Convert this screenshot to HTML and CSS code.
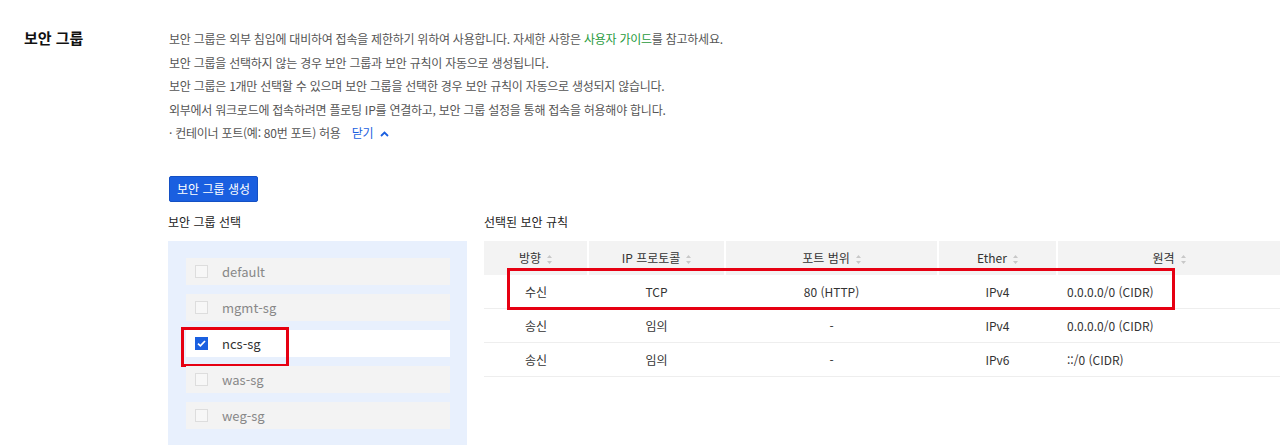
FILE: index.html
```html
<!DOCTYPE html>
<html lang="ko">
<head>
    <meta charset="UTF-8">
    <meta name="viewport" content="width=device-width, initial-scale=1.0">
    <title>보안 그룹</title>
    <link rel="stylesheet" href="styles.css">
</head>
<body>
    <div class="section">
        <h3 class="section-title">보안 그룹</h3>
        <div class="section-body">
            <ul class="notes">
                <li>보안 그룹은 외부 침입에 대비하여 접속을 제한하기 위하여 사용합니다. 자세한 사항은 <a class="guide" href="#">사용자 가이드</a>를 참고하세요.</li>
                <li>보안 그룹을 선택하지 않는 경우 보안 그룹과 보안 규칙이 자동으로 생성됩니다.</li>
                <li>보안 그룹은 1개만 선택할 수 있으며 보안 그룹을 선택한 경우 보안 규칙이 자동으로 생성되지 않습니다.</li>
                <li>외부에서 워크로드에 접속하려면 플로팅 IP를 연결하고, 보안 그룹 설정을 통해 접속을 허용해야 합니다.</li>
                <li>· 컨테이너 포트(예: 80번 포트) 허용
                    <a class="toggle" href="#">닫기
                        <svg width="9" height="6" viewBox="0 0 9 6"><path d="M1 5 L4.5 1.5 L8 5" fill="none" stroke="currentColor" stroke-width="1.8"/></svg>
                    </a>
                </li>
            </ul>

            <button class="btn-primary">보안 그룹 생성</button>

            <div class="pickers">
                <div class="group-picker">
                    <div class="label">보안 그룹 선택</div>
                    <div class="group-list">
                        <label class="group-item"><span class="check"></span>default</label>
                        <label class="group-item"><span class="check"></span>mgmt-sg</label>
                        <label class="group-item selected">
                            <span class="check">
                                <svg width="9" height="7" viewBox="0 0 9 7"><path d="M1 3.6 L3.4 5.8 L8 1" fill="none" stroke="#fff" stroke-width="1.7"/></svg>
                            </span>ncs-sg
                            <span class="mark mark-item"></span>
                        </label>
                        <label class="group-item"><span class="check"></span>was-sg</label>
                        <label class="group-item"><span class="check"></span>weg-sg</label>
                    </div>
                </div>

                <div class="rules">
                    <div class="label">선택된 보안 규칙</div>
                    <div class="table-wrap">
                        <table class="rule-table">
                            <colgroup>
                                <col style="width: 104px">
                                <col style="width: 137px">
                                <col style="width: 213px">
                                <col style="width: 119px">
                                <col>
                            </colgroup>
                            <thead>
                                <tr>
                                    <th>방향<svg class="sort" width="5" height="9" viewBox="0 0 5 9"><path d="M2.5 0 L5 3 L0 3 Z M2.5 9 L5 6 L0 6 Z" fill="#c8c8c8"/></svg></th>
                                    <th>IP 프로토콜<svg class="sort" width="5" height="9" viewBox="0 0 5 9"><path d="M2.5 0 L5 3 L0 3 Z M2.5 9 L5 6 L0 6 Z" fill="#c8c8c8"/></svg></th>
                                    <th>포트 범위<svg class="sort" width="5" height="9" viewBox="0 0 5 9"><path d="M2.5 0 L5 3 L0 3 Z M2.5 9 L5 6 L0 6 Z" fill="#c8c8c8"/></svg></th>
                                    <th>Ether<svg class="sort" width="5" height="9" viewBox="0 0 5 9"><path d="M2.5 0 L5 3 L0 3 Z M2.5 9 L5 6 L0 6 Z" fill="#c8c8c8"/></svg></th>
                                    <th>원격<svg class="sort" width="5" height="9" viewBox="0 0 5 9"><path d="M2.5 0 L5 3 L0 3 Z M2.5 9 L5 6 L0 6 Z" fill="#c8c8c8"/></svg></th>
                                </tr>
                            </thead>
                            <tbody>
                                <tr>
                                    <td>수신</td>
                                    <td>TCP</td>
                                    <td>80 (HTTP)</td>
                                    <td>IPv4</td>
                                    <td class="remote">0.0.0.0/0 (CIDR)</td>
                                </tr>
                                <tr>
                                    <td>송신</td>
                                    <td>임의</td>
                                    <td>-</td>
                                    <td>IPv4</td>
                                    <td class="remote">0.0.0.0/0 (CIDR)</td>
                                </tr>
                                <tr>
                                    <td>송신</td>
                                    <td>임의</td>
                                    <td>-</td>
                                    <td>IPv6</td>
                                    <td class="remote">::/0 (CIDR)</td>
                                </tr>
                            </tbody>
                        </table>
                        <span class="mark mark-row"></span>
                    </div>
                </div>
            </div>
        </div>
    </div>
</body>
</html>
```

FILE: styles.css
```css
body {
    margin: 0;
    font-family: "Noto Sans CJK KR", "Noto Sans", sans-serif;
    font-size: 12px;
    color: #333;
    background: #fff;
    overflow: hidden;
}
.section {
    display: flex;
}
.section-title {
    width: 145px;
    margin: 0;
    padding: 27px 0 0 24px;
    font-size: 15px;
    font-weight: bold;
    line-height: 22px;
    color: #111;
}
.section-body {
    flex: 1;
    padding-top: 27px;
}
.notes {
    list-style-type: none;
    margin: 0;
    padding: 0;
    color: #555;
    letter-spacing: -0.25px;
}
.notes li {
    line-height: 23.5px;
}
.guide {
    color: #1f9a3c;
    text-decoration: none;
}
.toggle {
    margin-left: 8px;
    color: #1a5fe0;
    text-decoration: none;
}
.toggle svg {
    margin-left: 4px;
    vertical-align: 1px;
}
.btn-primary {
    display: block;
    margin-top: 31px;
    width: 89px;
    height: 26px;
    padding: 0;
    border: 1px solid #1450c4;
    border-radius: 2px;
    background: #1a5fe0;
    color: #fff;
    font-family: inherit;
    font-size: 12px;
}
.pickers {
    display: flex;
    gap: 17px;
    margin-top: 11px;
}
.label {
    line-height: 18px;
    margin-bottom: 10px;
    color: #222;
}
.group-picker {
    width: 299px;
    margin-left: -1px;
}
.group-list {
    background: #e8f0fd;
    padding: 17px 17px 20px 18px;
    display: flex;
    flex-direction: column;
    gap: 9px;
}
.group-item {
    position: relative;
    display: flex;
    align-items: center;
    height: 27px;
    padding-left: 9px;
    background: #f3f3f3;
    color: #888;
    font-size: 13px;
}
.group-item.selected {
    background: #fff;
    color: #333;
}
.check {
    display: flex;
    align-items: center;
    justify-content: center;
    width: 11px;
    height: 11px;
    margin-right: 14px;
    border: 1px solid #ddd;
    background: #f7f7f7;
}
.selected .check {
    border-color: #1a5fe0;
    background: #1a5fe0;
}
.rules {
    flex: 1;
}
.table-wrap {
    position: relative;
}
.rule-table {
    width: 100%;
    border-collapse: collapse;
    table-layout: fixed;
}
.rule-table th {
    height: 34px;
    padding: 0;
    background: #f3f3f3;
    border-left: 2px solid #fff;
    font-weight: normal;
    color: #333;
}
.rule-table th:first-child {
    border-left: none;
}
.rule-table td {
    height: 33px;
    padding: 0;
    text-align: center;
    border-bottom: 1px solid #eee;
}
.rule-table td.remote {
    text-align: left;
    padding-left: 10px;
}
.sort {
    margin-left: 6px;
    vertical-align: -1px;
}
/* red highlight boxes drawn over the selected row and item */
.mark {
    position: absolute;
    border: 3px solid #e60012;
    pointer-events: none;
}
.mark-item {
    left: -5px;
    top: -3px;
    width: 102px;
    height: 34px;
}
.mark-row {
    left: 23px;
    top: 27px;
    width: 662px;
    height: 36px;
}
```
